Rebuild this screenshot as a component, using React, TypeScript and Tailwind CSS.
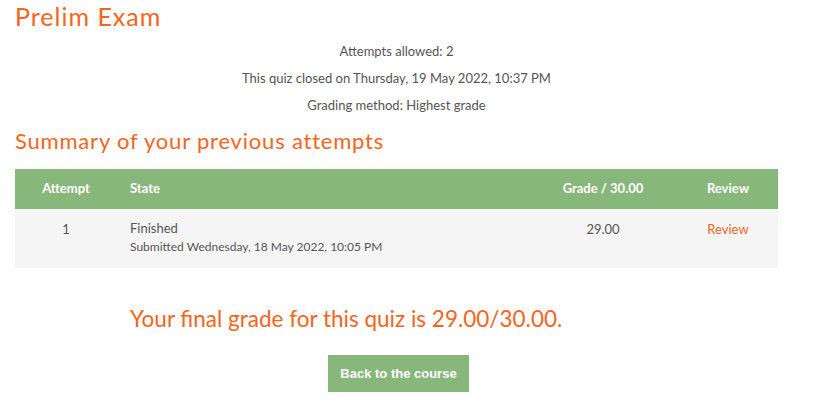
export default function App() {
  return (
    <div className="w-[828px] h-[418px] bg-white overflow-hidden font-['Lato',sans-serif] text-[#555]">
      <div className="w-[763px] ml-[15px]">
        <h2 className="text-[25px] leading-[30px] pt-[1px] tracking-[1px] text-[#f7641b]">Prelim Exam</h2>
        <div className="mt-[7px] flex flex-col items-center text-[13px] leading-[27px]">
          <p>Attempts allowed: 2</p>
          <p>This quiz closed on Thursday, 19 May 2022, 10:37 PM</p>
          <p>Grading method: Highest grade</p>
        </div>
        <h3 className="mt-[8px] text-[22px] leading-[28px] tracking-[0.8px] text-[#f7641b]">Summary of your previous attempts</h3>
        <table className="mt-[14px] w-full border-collapse text-[13px]">
          <thead>
            <tr className="bg-[#88b77b] text-white h-[40px]">
              <th className="w-[102px] text-center font-bold">Attempt</th>
              <th className="pl-[13px] text-left font-bold">State</th>
              <th className="w-[150px] text-center font-bold">Grade / 30.00</th>
              <th className="w-[100px] text-center font-bold">Review</th>
            </tr>
          </thead>
          <tbody>
            <tr className="bg-[#f5f5f5] h-[59px] align-top">
              <td className="text-center pt-[11px]">1</td>
              <td className="pl-[13px] pt-[11px]">
                <div className="leading-[16px]">Finished</div>
                <div className="text-[12px] leading-[14px] mt-[4px]">Submitted Wednesday, 18 May 2022, 10:05 PM</div>
              </td>
              <td className="text-center pt-[11px]">29.00</td>
              <td className="text-center pt-[11px] text-[#f7641b]">Review</td>
            </tr>
          </tbody>
        </table>
        <p className="mt-[36px] ml-[115px] text-[22.5px] leading-[30px] text-[#f7641b]">Your final grade for this quiz is 29.00/30.00.</p>
        <div className="mt-[21px] pl-[4px] flex justify-center">
          <button className="h-[37px] px-[12px] bg-[#88b77b] text-white text-[13px] font-bold font-['Liberation_Sans',sans-serif]">Back to the course</button>
        </div>
      </div>
    </div>
  );
}
